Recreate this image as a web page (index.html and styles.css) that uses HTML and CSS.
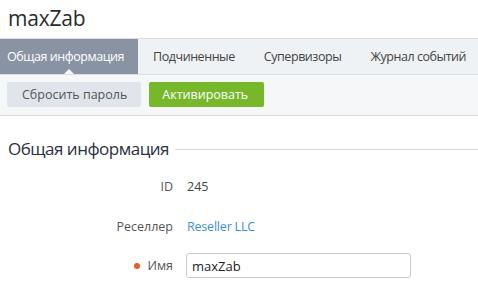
FILE: index.html
```html
<!DOCTYPE html>
<html lang="ru">
<head>
<meta charset="UTF-8" />
<meta name="viewport" content="width=device-width, initial-scale=1" />
<title>maxZab</title>
<link rel="stylesheet" href="styles.css">
</head>
<body>
  <div class="page">
    <h1 class="page-title">maxZab</h1>
    <nav class="tabs">
      <a class="tab active" href="#">Общая информация</a>
      <a class="tab" href="#">Подчиненные</a>
      <a class="tab" href="#">Супервизоры</a>
      <a class="tab" href="#">Журнал событий</a>
    </nav>
    <div class="toolbar">
      <button class="btn btn-default" type="button">Сбросить пароль</button>
      <button class="btn btn-success" type="button">Активировать</button>
    </div>
    <section class="section">
      <h2 class="section-title"><span>Общая информация</span></h2>
      <div class="fields">
        <div class="field-label">ID</div>
        <div class="field-value">245</div>
        <div class="field-label">Реселлер</div>
        <div class="field-value"><a href="#">Reseller LLC</a></div>
        <div class="field-label required">Имя</div>
        <div class="field-value"><input class="text-input" type="text" value="maxZab" /></div>
      </div>
    </section>
  </div>
</body>
</html>
```

FILE: styles.css
```css
* {margin: 0; padding: 0; box-sizing: border-box;}
body {
  font-family: 'Open Sans', 'Noto Sans', sans-serif;
  background: #fff;
  color: #333;
  font-size: 12.5px;
}
.page-title {
  font-weight: 400;
  font-size: 21px;
  letter-spacing: -0.2px;
  line-height: 36px;
  height: 38px;
  padding-left: 8px;
  color: #2b2b2b;
}
.tabs {
  display: flex;
  height: 37px;
  background: #eff2f5;
  border-top: 1px solid #dadee4;
  border-bottom: 1px solid #dadee4;
}
.tab {
  position: relative;
  display: flex;
  align-items: center;
  padding: 0 14px 0 15px;
  font-size: 12.5px;
  letter-spacing: -0.45px;
  color: #444;
  text-decoration: none;
  white-space: nowrap;
}
.tab:first-child {
  padding-left: 7px;
}
.tab.active {
  background: #8a93a4;
  color: #fff;
}
.tab.active::after {
  content: "";
  position: absolute;
  left: 50%;
  bottom: 0;
  margin-left: -5px;
  border: 5px solid transparent;
  border-bottom-color: #f6f7f9;
  border-top: 0;
}
.toolbar {
  display: flex;
  gap: 8px;
  height: 41px;
  padding: 7px 7px 0;
  background: #f6f7f9;
  border-bottom: 1px solid #dadee4;
}
.btn {
  height: 25px;
  border: none;
  border-radius: 2px;
  font-family: inherit;
  font-size: 12.5px;
  padding: 0 14px;
  cursor: pointer;
  white-space: nowrap;
}
.btn-default {
  background: #e0e5ec;
  color: #555;
  padding: 0 14px 0 15px;
}
.btn-success {
  background: #76b82a;
  color: #fff;
  padding: 0 16px 0 13px;
}
.section {
  padding: 21px 0 0 8px;
}
.section-title {
  display: flex;
  align-items: center;
  gap: 6px;
  font-weight: 400;
  font-size: 17px;
  letter-spacing: -0.5px;
  line-height: 24px;
  color: #2a3140;
  margin-bottom: 13px;
}
.section-title::after {
  content: "";
  flex: 1;
  height: 1px;
  background: #d5dae0;
}
.fields {
  display: grid;
  grid-template-columns: 165px 1fr;
  grid-auto-rows: 25px;
  column-gap: 14px;
  row-gap: 14.5px;
  align-items: center;
}
.field-label {
  display: flex;
  align-items: center;
  justify-content: flex-end;
  gap: 7px;
  color: #555;
}
.field-label.required::before {
  content: "";
  width: 6px;
  height: 6px;
  border-radius: 50%;
  background: #f05a28;
}
.field-value {
  color: #444;
}
.field-value a {
  color: #3d8fd6;
  text-decoration: none;
  letter-spacing: -0.2px;
}
.text-input {
  width: 225px;
  height: 25px;
  border: 1px solid #c7ccd2;
  border-radius: 3px;
  padding: 0 5px;
  font-family: inherit;
  font-size: 13px;
  color: #222;
  outline: none;
  margin-left: -1px;
}
```
